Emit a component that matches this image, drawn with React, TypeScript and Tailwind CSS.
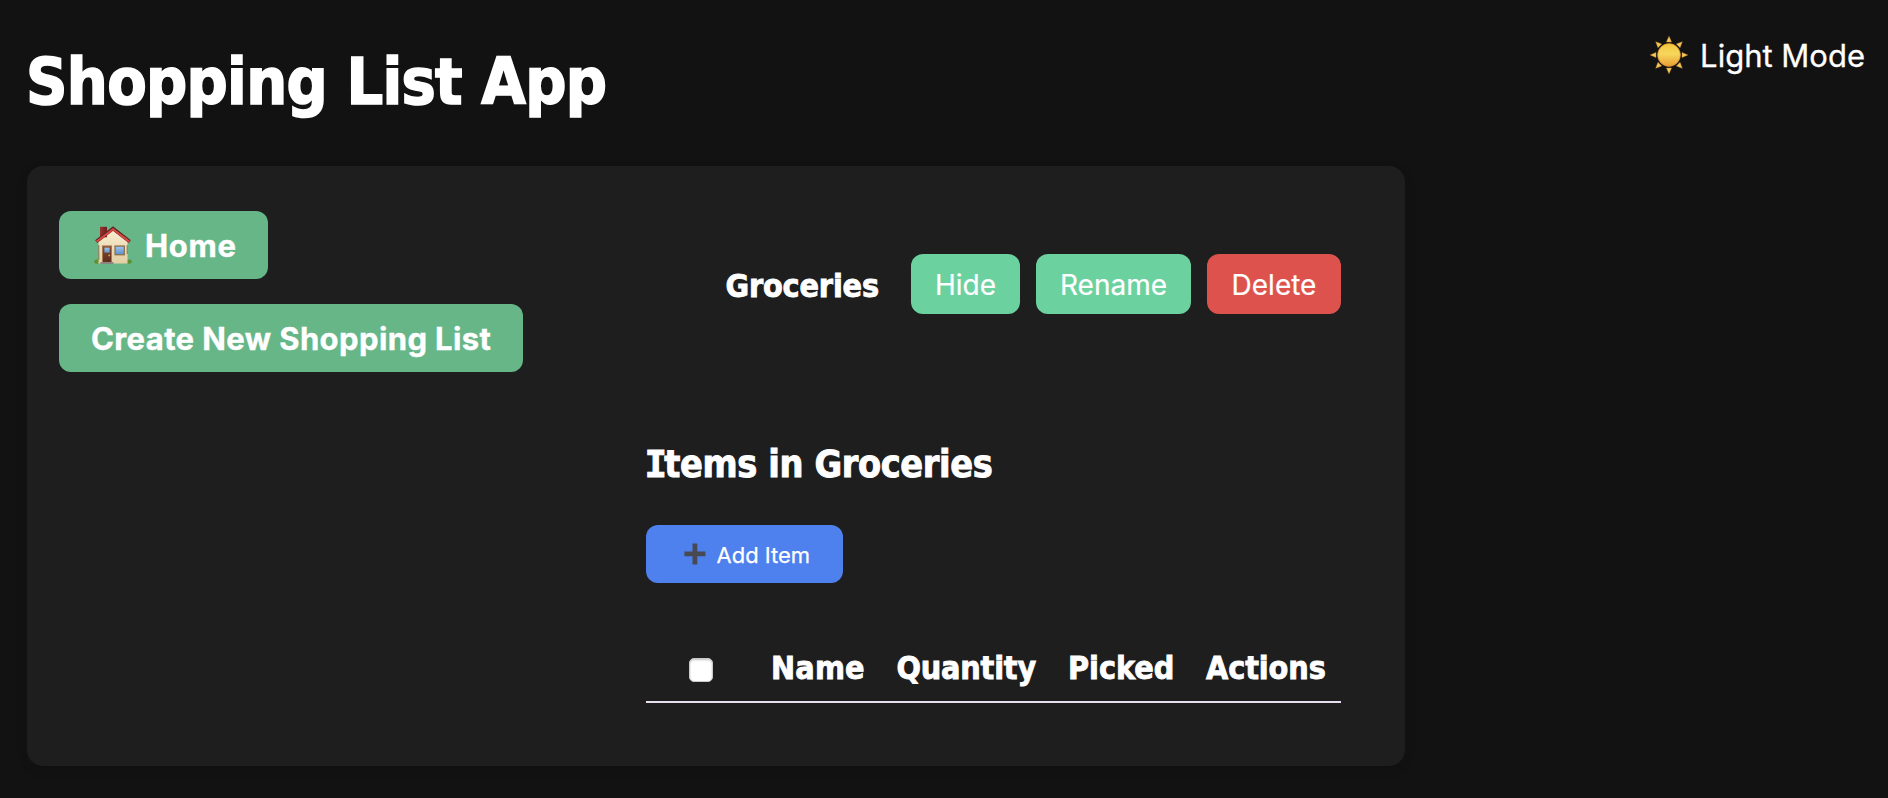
const headingFont =
  "font-['DejaVu_Sans_Condensed','DejaVu_Sans',sans-serif] font-bold";

function SunIcon() {
  return (
    <svg width="38" height="38" viewBox="0 0 38 38" aria-hidden="true">
      <defs>
        <linearGradient id="sun" x1="0" y1="0" x2="0" y2="1">
          <stop offset="0" stopColor="#f2c53c" />
          <stop offset="0.45" stopColor="#f7d75c" />
          <stop offset="1" stopColor="#e79d35" />
        </linearGradient>
      </defs>
      {[0, 45, 90, 135, 180, 225, 270, 315].map((angle) => (
        <path
          key={angle}
          d="M19 0.2 L21.6 6 H16.4 Z"
          fill="#f3c75a"
          stroke="#c8872c"
          strokeWidth="0.4"
          transform={`rotate(${angle} 19 19)`}
        />
      ))}
      <circle cx="19" cy="19" r="11.4" fill="url(#sun)" stroke="#d98a2b" strokeWidth="0.7" />
    </svg>
  );
}

function HouseIcon() {
  return (
    <svg width="38" height="38" viewBox="0 0 38 38" aria-hidden="true">
      <defs>
        <linearGradient id="wall" x1="0" y1="0" x2="0" y2="1">
          <stop offset="0" stopColor="#fbeed2" />
          <stop offset="1" stopColor="#e2cfa4" />
        </linearGradient>
        <linearGradient id="door" x1="0" y1="0" x2="0" y2="1">
          <stop offset="0" stopColor="#8a4a30" />
          <stop offset="1" stopColor="#5a2c1c" />
        </linearGradient>
        <linearGradient id="glass" x1="0" y1="0" x2="0" y2="1">
          <stop offset="0" stopColor="#9cc4ea" />
          <stop offset="1" stopColor="#5f95cd" />
        </linearGradient>
        <linearGradient id="chimney" x1="0" y1="0" x2="1" y2="0">
          <stop offset="0" stopColor="#9c3330" />
          <stop offset="1" stopColor="#6a1d20" />
        </linearGradient>
      </defs>
      <ellipse cx="3" cy="35.6" rx="2.8" ry="2.2" fill="#5f8f2f" />
      <ellipse cx="35" cy="35.6" rx="2.8" ry="2.2" fill="#5f8f2f" />
      <path d="M4.5 14.5 L19 2.5 L33.5 14.5 V37.4 H4.5 Z" fill="url(#wall)" />
      <path d="M4.8 19 V34 M33.2 19 V28" stroke="#7d6648" strokeWidth="0.9" />
      <path d="M7 20.5 H31 M7 24 H31 M7 27.5 H31 M7 31 H31" stroke="#dcc9a0" strokeWidth="0.3" />
      <rect x="6" y="0.8" width="7" height="10.5" fill="url(#chimney)" />
      <path d="M2.2 15.6 L19 2.6 L35.8 15.6" fill="none" stroke="#6d2422" strokeWidth="3.6" />
      <path d="M2.4 14.6 L19 1.9 L35.6 14.6" fill="none" stroke="#3e2c2c" strokeWidth="1.2" />
      <path d="M2.6 15.7 L19 3.2 L35.4 15.7" fill="none" stroke="#d9493f" strokeWidth="2.1" />
      <rect x="8" y="19.4" width="10" height="17.4" fill="#a67a52" />
      <rect x="9" y="20.4" width="8" height="16" fill="url(#door)" />
      <rect x="10.4" y="21.6" width="5.2" height="5" fill="url(#glass)" />
      <circle cx="15.2" cy="29.4" r="0.9" fill="#e2a63a" />
      <rect x="20.4" y="19.4" width="10.6" height="10" fill="#8e7457" />
      <rect x="21.8" y="20.8" width="7.8" height="7.2" fill="url(#glass)" />
      <rect x="6.4" y="36" width="13" height="2" fill="#8f8580" />
    </svg>
  );
}

function PlusIcon() {
  return (
    <svg width="22" height="22" viewBox="0 0 22 22" aria-hidden="true">
      <path
        d="M8.5 0.4 H13.3 V8.5 H21.4 V13.3 H13.3 V21.4 H8.5 V13.3 H0.4 V8.5 H8.5 Z"
        fill="#474a52"
      />
    </svg>
  );
}

export default function App() {
  return (
    <div className="h-[798px] w-full overflow-hidden bg-[#121212] pl-[27px] font-['Inter',sans-serif] text-white">
      <header className="flex h-[166px] items-start justify-between pr-[23px]">
        <h1 className={`${headingFont} -ml-[1px] pt-[46px] text-[64px] leading-[72px] tracking-[-0.67px] whitespace-nowrap [-webkit-text-stroke:1.6px_white]`}>
          Shopping List App
        </h1>
        <button className="flex items-start gap-[12.5px] pt-[36px] text-[31px] leading-[38px] whitespace-nowrap [-webkit-text-stroke:0.3px_white]">
          <SunIcon />
          <span className="pt-px">Light Mode</span>
        </button>
      </header>

      <main className="flex h-[600px] w-[1378px] rounded-2xl bg-[#1e1e1e] pt-[45px] pl-[32px] shadow-[0_4px_12px_rgba(0,0,0,0.1)]">
        <nav className="flex w-[587px] flex-col items-start gap-[25px]">
          <button className="flex h-[68px] w-[209px] items-center gap-[13px] rounded-xl bg-[#66b687] pl-[35px] text-[31px] font-bold tracking-[0.7px] [-webkit-text-stroke:0.4px_white]">
            <HouseIcon />
            <span className="pt-[2px]">Home</span>
          </button>
          <button className="flex h-[68px] w-[464px] items-center rounded-xl bg-[#66b687] pt-[2px] pl-[32px] text-[31px] font-bold tracking-[0.4px] whitespace-nowrap [-webkit-text-stroke:0.4px_white]">
            Create New Shopping List
          </button>
        </nav>

        <section className="w-[695px] pt-[43px]">
          <div className="flex h-[60px] items-center justify-end gap-[16px] text-[28px]">
            <span className={`${headingFont} mr-[16px] pt-[4px] text-[32px] leading-[38px] tracking-[-0.15px] [-webkit-text-stroke:0.8px_white]`}>
              Groceries
            </span>
            <button className="flex h-[60px] w-[109px] items-center justify-center rounded-xl bg-[#6bd19f] pt-[2px] [-webkit-text-stroke:0.2px_white]">Hide</button>
            <button className="flex h-[60px] w-[155px] items-center justify-center rounded-xl bg-[#6bd19f] pt-[2px] [-webkit-text-stroke:0.2px_white]">Rename</button>
            <button className="flex h-[60px] w-[134px] items-center justify-center rounded-xl bg-[#dd524c] pt-[2px] [-webkit-text-stroke:0.2px_white]">Delete</button>
          </div>

          <h2 className={`${headingFont} -ml-[1.5px] mt-[127px] h-[84px] text-[37.44px] leading-[46px] tracking-[-0.35px] whitespace-nowrap [-webkit-text-stroke:0.9px_white]`}>
            <span className="mr-[-2.5px] font-['DejaVu_Sans_Mono',monospace]">I</span>tems in Groceries
          </h2>

          <button className="flex h-[58px] w-[197px] items-center gap-[10.5px] rounded-xl bg-[#4e80ee] pl-[38px] text-[22px] [-webkit-text-stroke:0.25px_white]">
            <PlusIcon />
            <span className="pt-[2px]">Add Item</span>
          </button>

          <div className={`${headingFont} mt-[49px] flex h-[71px] border-b-2 border-[#e8e0ef] text-[32px] leading-[38px] whitespace-nowrap [-webkit-text-stroke:0.8px_white]`}>
            <div className="w-[125px] pt-[26px] pl-[43px]">
              <div className="size-[24px] rounded-[5px] border border-[#c9c9c9] bg-white shadow-[inset_0_1px_2px_rgba(0,0,0,0.25)]" />
            </div>
            <div className="w-[125.5px] pt-[17px] tracking-[0.2px]">Name</div>
            <div className="w-[171.5px] pt-[17px] tracking-[-0.2px]">Quantity</div>
            <div className="w-[138px] pt-[17px]">Picked</div>
            <div className="w-[135px] pt-[17px] tracking-[-0.1px]">Actions</div>
          </div>
        </section>
      </main>
    </div>
  );
}
